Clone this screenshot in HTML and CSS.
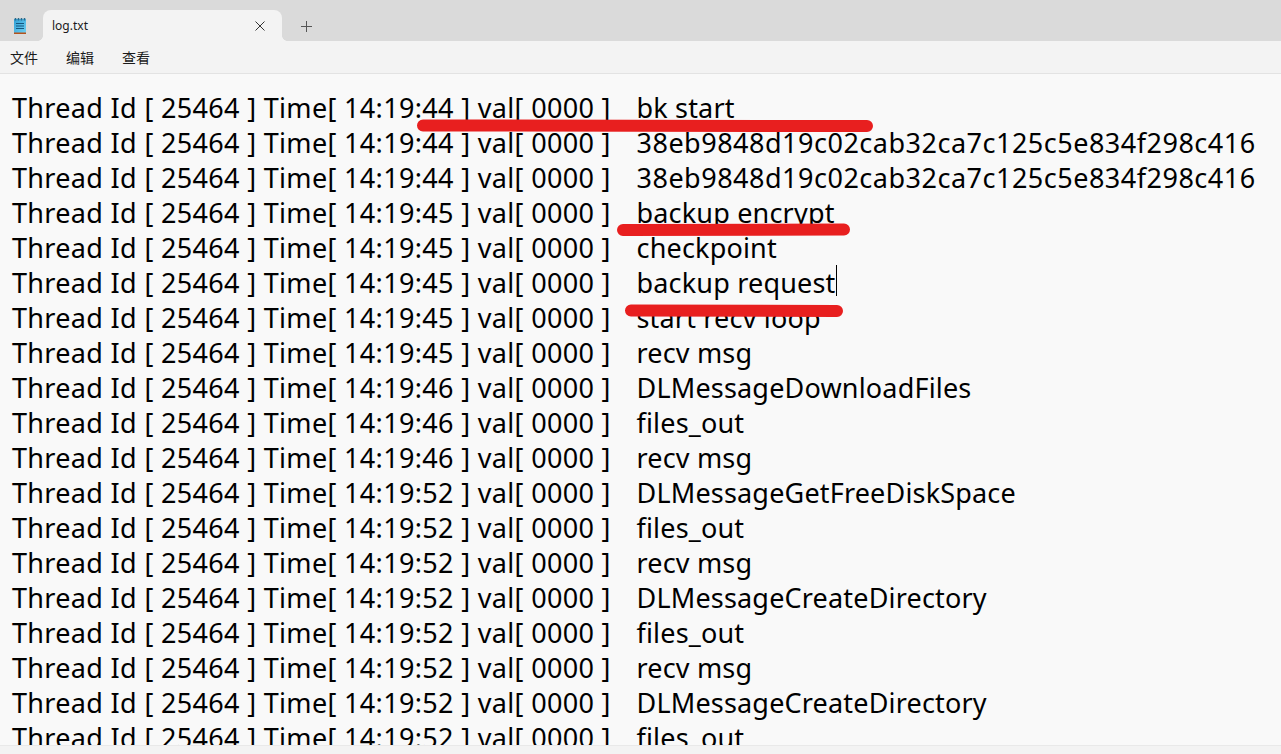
FILE: index.html
```html
<!DOCTYPE html>
<html lang="zh">
<head>
<meta charset="utf-8">
<title>log.txt</title>
<link rel="stylesheet" href="styles.css">
</head>
<body>
<div class="window">
  <header class="titlebar">
    <svg class="app-icon" width="14" height="18" viewBox="0 0 14 18">
      <defs><linearGradient id="pad" x1="0" y1="0" x2="1" y2="1"><stop offset="0" stop-color="#2f9fd6"/><stop offset="1" stop-color="#6fd0f2"/></linearGradient></defs>
      <rect x="1" y="2" width="12" height="14" fill="url(#pad)"/>
      <rect x="1" y="15.500" width="12" height="1.500" fill="#b5531c"/>
      <path d="M2.500 1v2.500M5.500 1v2.500M8.500 1v2.500M11.500 1v2.500" stroke="#2b6a8a" stroke-width="1.500"/>
      <path d="M3 6.500h8M3 9h8M3 11.500h8" stroke="#14577f" stroke-width="1"/>
    </svg>
    <div class="tab">
      <span class="tab-title">log.txt</span>
      <svg class="tab-close" width="10" height="10" viewBox="0 0 10 10"><path d="M.5.5l9 9M9.500.5l-9 9" stroke="#333" stroke-width="1" fill="none"/></svg>
    </div>
    <svg class="tab-new" width="11" height="11" viewBox="0 0 11 11"><path d="M5.500 0v11M0 5.500h11" stroke="#555" stroke-width="1" fill="none"/></svg>
  </header>
  <nav class="menubar">
    <span class="menu-item">文件</span>
    <span class="menu-item">编辑</span>
    <span class="menu-item">查看</span>
  </nav>
  <main class="editor">
    <div class="line"><span class="meta">Thread Id [ 25464 ] Time[ 14:19:44 ] val[ 0000 ]</span><span>bk start</span></div>
    <div class="line"><span class="meta">Thread Id [ 25464 ] Time[ 14:19:44 ] val[ 0000 ]</span><span class="hash">38eb9848d19c02cab32ca7c125c5e834f298c416</span></div>
    <div class="line"><span class="meta">Thread Id [ 25464 ] Time[ 14:19:44 ] val[ 0000 ]</span><span class="hash">38eb9848d19c02cab32ca7c125c5e834f298c416</span></div>
    <div class="line"><span class="meta">Thread Id [ 25464 ] Time[ 14:19:45 ] val[ 0000 ]</span><span>backup encrypt</span></div>
    <div class="line"><span class="meta">Thread Id [ 25464 ] Time[ 14:19:45 ] val[ 0000 ]</span><span>checkpoint</span></div>
    <div class="line"><span class="meta">Thread Id [ 25464 ] Time[ 14:19:45 ] val[ 0000 ]</span><span class="caret">backup request</span></div>
    <div class="line"><span class="meta">Thread Id [ 25464 ] Time[ 14:19:45 ] val[ 0000 ]</span><span>start recv loop</span></div>
    <div class="line"><span class="meta">Thread Id [ 25464 ] Time[ 14:19:45 ] val[ 0000 ]</span><span>recv msg</span></div>
    <div class="line"><span class="meta">Thread Id [ 25464 ] Time[ 14:19:46 ] val[ 0000 ]</span><span>DLMessageDownloadFiles</span></div>
    <div class="line"><span class="meta">Thread Id [ 25464 ] Time[ 14:19:46 ] val[ 0000 ]</span><span>files_out</span></div>
    <div class="line"><span class="meta">Thread Id [ 25464 ] Time[ 14:19:46 ] val[ 0000 ]</span><span>recv msg</span></div>
    <div class="line"><span class="meta">Thread Id [ 25464 ] Time[ 14:19:52 ] val[ 0000 ]</span><span>DLMessageGetFreeDiskSpace</span></div>
    <div class="line"><span class="meta">Thread Id [ 25464 ] Time[ 14:19:52 ] val[ 0000 ]</span><span>files_out</span></div>
    <div class="line"><span class="meta">Thread Id [ 25464 ] Time[ 14:19:52 ] val[ 0000 ]</span><span>recv msg</span></div>
    <div class="line"><span class="meta">Thread Id [ 25464 ] Time[ 14:19:52 ] val[ 0000 ]</span><span>DLMessageCreateDirectory</span></div>
    <div class="line"><span class="meta">Thread Id [ 25464 ] Time[ 14:19:52 ] val[ 0000 ]</span><span>files_out</span></div>
    <div class="line"><span class="meta">Thread Id [ 25464 ] Time[ 14:19:52 ] val[ 0000 ]</span><span>recv msg</span></div>
    <div class="line"><span class="meta">Thread Id [ 25464 ] Time[ 14:19:52 ] val[ 0000 ]</span><span>DLMessageCreateDirectory</span></div>
    <div class="line"><span class="meta">Thread Id [ 25464 ] Time[ 14:19:52 ] val[ 0000 ]</span><span>files_out</span></div>
    <svg class="marks" width="1281" height="754" viewBox="0 0 1281 754">
      <path d="M423 125.500L867 126" stroke="#e81f1f" stroke-width="12" stroke-linecap="round" fill="none"/>
      <path d="M623 230L844 229.500" stroke="#e81f1f" stroke-width="12" stroke-linecap="round" fill="none"/>
      <path d="M631 310.500L837 311" stroke="#e81f1f" stroke-width="12" stroke-linecap="round" fill="none"/>
    </svg>
  </main>
  <footer class="statusbar"></footer>
</div>
</body>
</html>
```
FILE: styles.css
```css
* { box-sizing: border-box; }
html, body { margin: 0; height: 100%; overflow: hidden; }
body { font-family: "Noto Sans", "Noto Sans CJK SC", sans-serif; background: #f9f9f9; color: #000; }
.window { width: 1281px; height: 754px; display: flex; flex-direction: column; position: relative; }
.titlebar { height: 41px; background: #dadada; display: flex; align-items: flex-end; flex: none; }
.app-icon { margin: 0 0 6px 13px; flex: none; }
.tab { position: relative; width: 239px; height: 31px; margin-left: 16px; background: #f3f3f3; border-radius: 8px 8px 0 0; display: flex; align-items: center; justify-content: space-between; padding: 0 17px 0 9px; font-size: 12px; color: #1a1a1a; }
.tab::before, .tab::after { content: ""; position: absolute; bottom: 0; width: 5px; height: 5px; }
.tab::before { left: -5px; background: radial-gradient(circle at 0 0, #dadada 4.500px, #f3f3f3 5px); }
.tab::after { right: -5px; background: radial-gradient(circle at 100% 0, #dadada 4.500px, #f3f3f3 5px); }
.tab-new { margin: 0 0 9px 19px; }
.menubar { height: 33px; background: #f3f3f3; border-bottom: 1px solid #e3e3e3; display: flex; align-items: center; padding-left: 10px; gap: 28px; font-size: 14px; color: #1a1a1a; flex: none; }
.editor { flex: 1; min-height: 0; overflow: hidden; background: #f9f9f9; padding: 16px 0 0 12px; }
.line { display: flex; height: 35px; line-height: 35px; font-size: 27px; letter-spacing: .18px; white-space: nowrap; }
.meta { width: 624.500px; flex: none; letter-spacing: .33px; }
.hash { letter-spacing: .5px; }
.caret { border-right: 1px solid #000; height: 31px; }
.marks { position: absolute; left: 0; top: 0; pointer-events: none; }
.statusbar { height: 9px; background: #f3f3f3; border-top: 1px solid #e9e9e9; flex: none; }
```
